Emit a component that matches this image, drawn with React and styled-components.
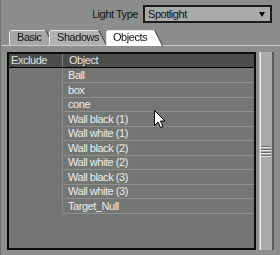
import styled, { createGlobalStyle } from 'styled-components';

const GlobalStyle = createGlobalStyle`
    html, body {
        margin: 0;
        padding: 0;
        background: #8c8e8c;
    }
    body {
        width: 280px;
        height: 255px;
        overflow: hidden;
        font-family: "Liberation Sans", Arial, sans-serif;
        font-size: 11px;
        letter-spacing: -0.45px;
    }
`;

const Panel = styled.div`
    position: relative;
    width: 280px;
    height: 255px;
    display: flex;
    flex-direction: column;
    border-left: 1px solid #6e706e;
    box-sizing: border-box;
`;

const TopRow = styled.div`
    display: flex;
    justify-content: flex-end;
    align-items: center;
    gap: 5px;
    padding: 5px 8px 0 0;
    height: 18px;
`;

const Label = styled.div`
    width: 45px;
    overflow: hidden;
    display: flex;
    justify-content: flex-end;
    white-space: nowrap;
    color: #111;
`;

const Select = styled.div`
    width: 129px;
    height: 18px;
    box-sizing: border-box;
    border: 2px solid #1c1c1c;
    background: #a9aba9;
    display: flex;
    align-items: center;
    justify-content: space-between;
    padding: 0 5px 0 3px;
    color: #111;
`;

const Arrow = styled.span`
    width: 0;
    height: 0;
    border-left: 3.5px solid transparent;
    border-right: 3.5px solid transparent;
    border-top: 5px solid #000;
`;

const TabBar = styled.div`
    margin-top: 7px;
    height: 15px;
    display: flex;
    align-items: flex-end;
    padding-left: 8px;
    border-bottom: 1px solid #c9cbc9;
`;

const TabWrap = styled.div`
    position: relative;
    z-index: ${p => p.$z};
    margin-left: ${p => p.$offset}px;
    margin-bottom: ${p => (p.$active ? -1 : 0)}px;
    filter: drop-shadow(1px 0 0 #3c3e3c);
`;

const TabFace = styled.div`
    width: ${p => p.$width}px;
    height: ${p => (p.$active ? 16 : 15)}px;
    box-sizing: border-box;
    padding-left: ${p => p.$pad}px;
    line-height: 15px;
    background: ${p => p.$bg};
    color: #111;
    clip-path: polygon(0 2px, 2px 0, calc(100% - 8px) 0, 100% 100%, 0 100%);
    box-shadow: inset 1px 1px 0 #e6e8e6;
`;

const ListRow = styled.div`
    display: flex;
    margin-top: 6px;
    padding-left: 6px;
    gap: 3px;
`;

const ListBox = styled.div`
    width: 249px;
    height: 198px;
    box-sizing: border-box;
    border: 2px solid #0a0a0a;
    background: #747674;
    display: flex;
    flex-direction: column;
`;

const HeaderRow = styled.div`
    display: grid;
    grid-template-columns: 54px 1fr;
    height: 13px;
    background: #4b4e4b;
    border-bottom: 1px solid #000;
    color: #e2e4e2;
    line-height: 13px;
`;

const HeaderCell = styled.div`
    padding-left: ${p => p.$pad}px;
    border-right: ${p => (p.$divider ? '1px solid #7e807e' : 'none')};
    white-space: nowrap;
    overflow: hidden;
`;

const Row = styled.div`
    display: grid;
    grid-template-columns: 54px 1fr;
    height: 14.5px;
`;

const ExcludeCell = styled.div`
    border-right: 1px solid #888a88;
`;

const NameCell = styled.div`
    box-sizing: border-box;
    border-bottom: 1px solid #8e908e;
    padding-left: 5px;
    color: #ececec;
    line-height: 14px;
    white-space: nowrap;
`;

const Scrollbar = styled.div`
    width: 15px;
    height: 198px;
    box-sizing: border-box;
    background: #a9aba9;
    border-left: 1px solid #c0c2c0;
    border-right: 2px solid #5c5e5c;
    box-shadow: inset 1px 0 0 #eeeeee;
    display: flex;
    flex-direction: column;
    justify-content: center;
    align-items: center;
    gap: 1px;
`;

const Grip = styled.div`
    width: 10px;
    height: 0;
    border-top: 1px solid #6a6c6a;
    border-bottom: 1px solid #e6e6e6;
`;

const Cursor = styled.svg`
    position: absolute;
    left: 153px;
    top: 110px;
`;

const objects = [
    'Ball',
    'box',
    'cone',
    'Wall black (1)',
    'Wall white (1)',
    'Wall black (2)',
    'Wall white (2)',
    'Wall black (3)',
    'Wall white (3)',
    'Target_Null',
];

const tabs = [
    { name: 'Basic', width: 44, pad: 8, offset: 0, bg: '#a5a7a5', z: 1 },
    { name: 'Shadows', width: 57, pad: 8, offset: -4, bg: '#b0b2b0', z: 2 },
    { name: 'Objects', width: 56, pad: 7, offset: 0, bg: '#ffffff', z: 3, active: true },
];

const App = () => {
    return (
        <Panel>
            <GlobalStyle />
            <TopRow>
                <Label>Light Type</Label>
                <Select>
                    <span>Spotlight</span>
                    <Arrow />
                </Select>
            </TopRow>
            <TabBar>
                {tabs.map(t => (
                    <TabWrap key={t.name} $z={t.z} $offset={t.offset} $active={t.active}>
                        <TabFace $width={t.width} $pad={t.pad} $bg={t.bg} $active={t.active}>
                            {t.name}
                        </TabFace>
                    </TabWrap>
                ))}
            </TabBar>
            <ListRow>
                <ListBox>
                    <HeaderRow>
                        <HeaderCell $pad={2} $divider>Exclude</HeaderCell>
                        <HeaderCell $pad={6}>Object</HeaderCell>
                    </HeaderRow>
                    {objects.map(name => (
                        <Row key={name}>
                            <ExcludeCell />
                            <NameCell>{name}</NameCell>
                        </Row>
                    ))}
                </ListBox>
                <Scrollbar>
                    <Grip />
                    <Grip />
                    <Grip />
                    <Grip />
                </Scrollbar>
            </ListRow>
            <Cursor width="12" height="19" viewBox="0 0 12 19">
                <path d="M0.5 0.5 L0.5 15.5 L4 12 L6.5 17.5 L9 16.5 L6.5 11 L11 11 Z" fill="#fff" stroke="#000" strokeWidth="1" />
            </Cursor>
        </Panel>
    );
};

export default App;
